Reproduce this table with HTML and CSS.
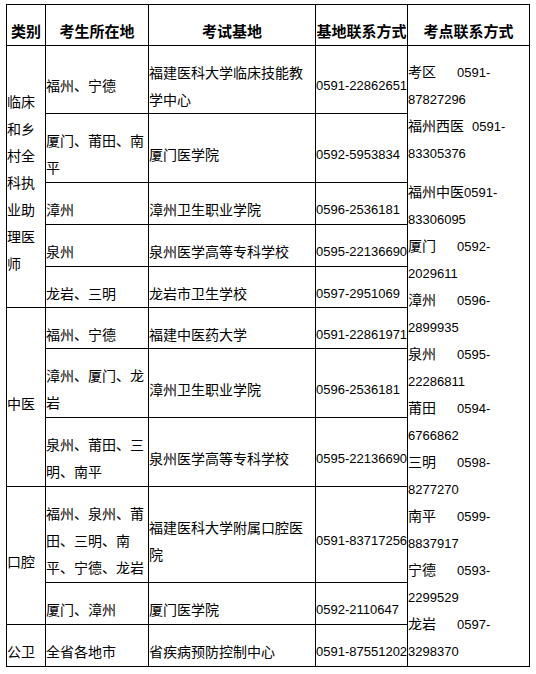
FILE: index.html
```html
<!DOCTYPE html>
<html lang="zh-CN">
<head>
<meta charset="utf-8">
<title>考试基地联系方式</title>
<link rel="stylesheet" href="styles.css">
</head>
<body>
<div class="page">
  <div class="grid">
    <div class="cell head">类别</div>
    <div class="cell head">考生所在地</div>
    <div class="cell head">考试基地</div>
    <div class="cell head">基地联系方式</div>
    <div class="cell head">考点联系方式</div>

    <div class="cell span5">临床和乡村全科执业助理医师</div>
    <div class="cell">福州、宁德</div>
    <div class="cell">福建医科大学临床技能教学中心</div>
    <div class="cell"><span class="tel">0591-22862651</span></div>
    <div class="cell contacts span11">
      <div class="entry"><span class="lbl">考区</span><span class="tel">0591-</span><br><span class="tel">87827296</span></div>
      <div class="entry"><span class="lbl4">福州西医</span><span class="tel">0591-</span><br><span class="tel">83305376</span></div>
      <div class="entry gap"><span>福州中医</span><span class="tel">0591-</span><br><span class="tel">83306095</span></div>
      <div class="entry"><span class="lbl">厦门</span><span class="tel">0592-</span><br><span class="tel">2029611</span></div>
      <div class="entry"><span class="lbl">漳州</span><span class="tel">0596-</span><br><span class="tel">2899935</span></div>
      <div class="entry"><span class="lbl">泉州</span><span class="tel">0595-</span><br><span class="tel">22286811</span></div>
      <div class="entry"><span class="lbl">莆田</span><span class="tel">0594-</span><br><span class="tel">6766862</span></div>
      <div class="entry"><span class="lbl">三明</span><span class="tel">0598-</span><br><span class="tel">8277270</span></div>
      <div class="entry"><span class="lbl">南平</span><span class="tel">0599-</span><br><span class="tel">8837917</span></div>
      <div class="entry"><span class="lbl">宁德</span><span class="tel">0593-</span><br><span class="tel">2299529</span></div>
      <div class="entry"><span class="lbl">龙岩</span><span class="tel">0597-</span><br><span class="tel">3298370</span></div>
    </div>

    <div class="cell">厦门、莆田、南平</div>
    <div class="cell">厦门医学院</div>
    <div class="cell"><span class="tel">0592-5953834</span></div>

    <div class="cell">漳州</div>
    <div class="cell">漳州卫生职业学院</div>
    <div class="cell"><span class="tel">0596-2536181</span></div>

    <div class="cell">泉州</div>
    <div class="cell">泉州医学高等专科学校</div>
    <div class="cell"><span class="tel">0595-22136690</span></div>

    <div class="cell">龙岩、三明</div>
    <div class="cell">龙岩市卫生学校</div>
    <div class="cell"><span class="tel">0597-2951069</span></div>

    <div class="cell span3">中医</div>
    <div class="cell">福州、宁德</div>
    <div class="cell">福建中医药大学</div>
    <div class="cell"><span class="tel">0591-22861971</span></div>

    <div class="cell">漳州、厦门、龙岩</div>
    <div class="cell">漳州卫生职业学院</div>
    <div class="cell"><span class="tel">0596-2536181</span></div>

    <div class="cell">泉州、莆田、三明、南平</div>
    <div class="cell">泉州医学高等专科学校</div>
    <div class="cell"><span class="tel">0595-22136690</span></div>

    <div class="cell span2">口腔</div>
    <div class="cell">福州、泉州、莆田、三明、南平、宁德、龙岩</div>
    <div class="cell">福建医科大学附属口腔医院</div>
    <div class="cell"><span class="tel">0591-83717256</span></div>

    <div class="cell">厦门、漳州</div>
    <div class="cell">厦门医学院</div>
    <div class="cell"><span class="tel">0592-2110647</span></div>

    <div class="cell">公卫</div>
    <div class="cell">全省各地市</div>
    <div class="cell">省疾病预防控制中心</div>
    <div class="cell"><span class="tel">0591-87551202</span></div>
  </div>
</div>
</body>
</html>
```

FILE: styles.css
```css
html, body {
  margin: 0;
  padding: 0;
  background: #fff;
}

body {
  font-family: "Noto Sans CJK SC", "Noto Sans", sans-serif;
  font-size: 14px;
  color: #000;
}

.page {
  padding: 4px 0 0 6px;
}

.grid {
  display: grid;
  width: max-content;
  grid-template-columns: 38px 102px 166px 91px 121px;
  grid-template-rows: 40px 67px 68px 41px 41px 40px 40px 68px 68px 95px 41px 41px;
  gap: 1px;
  padding: 1px;
  background: #000;
}

.cell {
  background: #fff;
  display: flex;
  flex-direction: column;
  justify-content: center;
  padding-top: 12px;
  line-height: 27px;
  word-break: break-all;
  min-width: 0;
  overflow: hidden;
}

.head {
  font-weight: bold;
  font-size: 15px;
  text-align: center;
  padding-top: 10px;
  word-break: keep-all;
  white-space: nowrap;
}

.span5 { grid-row: span 5; }
.span3 { grid-row: span 3; }
.span2 { grid-row: span 2; }
.span11 { grid-row: span 11; }

.tel {
  font-family: "Liberation Sans", Arial, sans-serif;
  font-size: 13px;
  line-height: 1;
  white-space: nowrap;
}

.contacts {
  justify-content: flex-start;
  padding-top: 12px;
}

.entry {
  white-space: nowrap;
  height: 54px;
}

.entry.gap {
  margin-top: 12px;
}

.lbl {
  display: inline-block;
  width: 49px;
}

.lbl4 {
  display: inline-block;
  margin-right: 8px;
}
```
